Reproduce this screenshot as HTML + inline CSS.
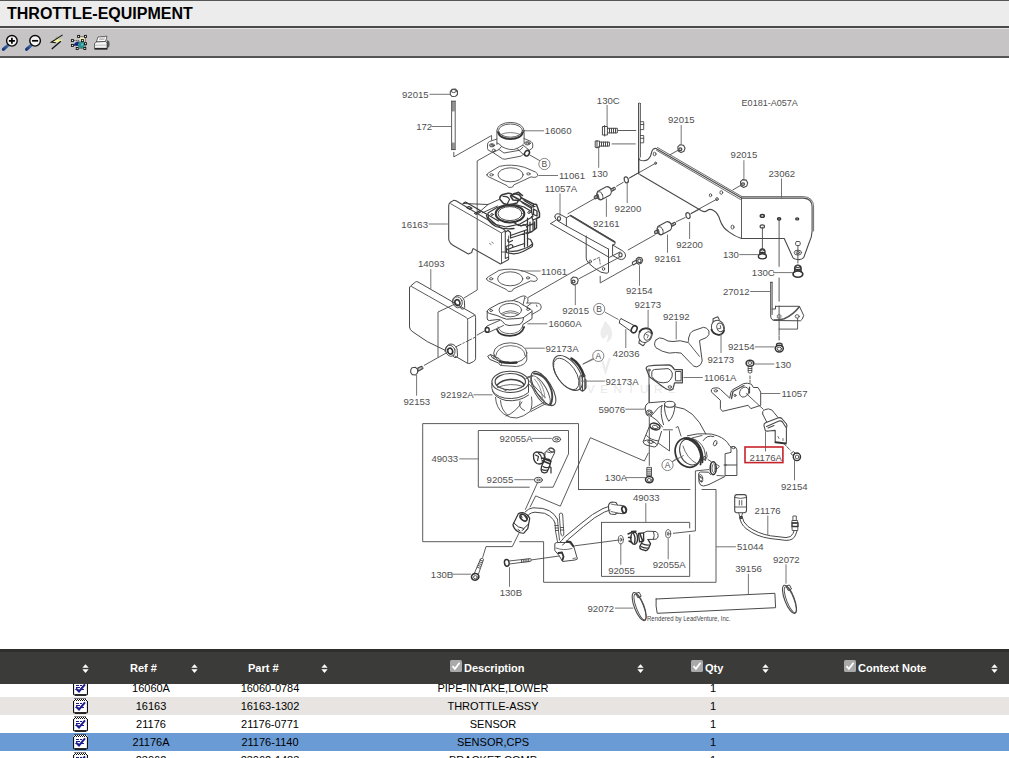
<!DOCTYPE html>
<html><head><meta charset="utf-8">
<style>
*{margin:0;padding:0;box-sizing:border-box}
html,body{width:1009px;height:758px;overflow:hidden;background:#fff;font-family:"Liberation Sans",sans-serif}
#top{position:absolute;left:0;top:0;width:1009px;height:26px;background:#ececec;border-top:1px solid #555}
#title{position:absolute;left:7px;top:3px;font-size:16px;font-weight:bold;color:#000;line-height:19px;white-space:nowrap}
#l1{position:absolute;left:0;top:26px;width:1009px;height:2px;background:#4a4a4a}
#tb{position:absolute;left:0;top:28px;width:1009px;height:29px;background:#c6c4c4;border-top:1px solid #e4e4e4}
#l2{position:absolute;left:0;top:56px;width:1009px;height:2px;background:#555}
#dg{position:absolute;left:0;top:0}
#th{position:absolute;left:0;top:649px;width:1009px;height:35px;background:#3b3b39;border-top:3px solid #2e2e2d}
.r{position:absolute;left:0;width:1009px;height:18px;font-size:11px;line-height:19px;color:#000}
.r span{position:absolute;top:0;text-align:center;white-space:nowrap}
.h{position:absolute;color:#fff;font-weight:bold;font-size:11px;top:662px;white-space:nowrap}
.ic{position:absolute;left:73px;top:1px;width:15px;height:16px}
.sa{position:absolute;top:664.3px;width:7px;height:9px}
.cb{position:absolute;top:660px;width:12px;height:12px}
</style></head><body>
<div id="top"><div id="title">THROTTLE-EQUIPMENT</div></div>
<div id="l1"></div><div id="tb"></div><svg id="tbi" width="130" height="30" viewBox="0 28 130 30" style="position:absolute;left:0;top:28px">
<defs><linearGradient id="hg" x1="0" y1="1" x2="1" y2="0"><stop offset="0" stop-color="#12306e"/><stop offset="1" stop-color="#6f9fd0"/></linearGradient></defs>
<g id="zm"><path d="M7.6 45.6L3.3 49.4" stroke="url(#hg)" stroke-width="2.8" stroke-linecap="round"/><path d="M7.6 45.6L3.3 49.4" stroke="#1b3f86" stroke-width="2.8" stroke-linecap="round" opacity="0.55"/>
<circle cx="11.9" cy="40.8" r="5.3" fill="#f4f4f4" stroke="#0a0a0a" stroke-width="1.4"/></g>
<path d="M8.9 40.8H14.9M11.9 37.8V43.8" stroke="#000" stroke-width="1.7"/>
<g transform="translate(23.2 0)"><path d="M7.6 45.6L3.3 49.4" stroke="url(#hg)" stroke-width="2.8" stroke-linecap="round"/><path d="M7.6 45.6L3.3 49.4" stroke="#1b3f86" stroke-width="2.8" stroke-linecap="round" opacity="0.55"/>
<circle cx="11.9" cy="40.8" r="5.3" fill="#f4f4f4" stroke="#0a0a0a" stroke-width="1.4"/></g>
<path d="M32.1 40.8H38.1" stroke="#000" stroke-width="1.7"/>
<path d="M62.4 34.8L51.3 42L55.5 42.6L60.6 41.4L51.8 49L62.8 39.5L58 40Z" fill="#f2f29a" stroke="none"/>
<path d="M62.6 34.9L51.3 42.2L55.8 42.8" fill="none" stroke="#111" stroke-width="1.1"/>
<path d="M60.8 41.3L51.8 48.9" fill="none" stroke="#111" stroke-width="1.3"/>
<path d="M57 36.5l-2.5 3.5" stroke="#888" stroke-width="0.6"/>
<!-- icon 4 -->
<path d="M78.5 36.5H85.5V48.5H77.5M72.3 40.5L82 40.5M72.3 45.5H77" stroke="#111" stroke-width="0.7" stroke-dasharray="1 1" fill="none"/>
<path d="M79.5 37.5h5v3.5h-5z" fill="#efe9a8"/>
<path d="M73.5 45.5Q75 41 79.5 41.5L79 46Z" fill="#1d2a78"/>
<circle cx="81.4" cy="45" r="3.4" fill="#2a9090"/><circle cx="82.2" cy="44.6" r="1.2" fill="#5cc0b8"/>
<g fill="#fff" stroke="#111" stroke-width="0.9"><rect x="77.6" y="35.4" width="2" height="2"/><rect x="84.5" y="35.4" width="2" height="2"/><rect x="71.4" y="39.6" width="2" height="2"/><rect x="81.4" y="39.6" width="2" height="2"/><rect x="71.4" y="44.4" width="2" height="2"/><rect x="84.5" y="42.7" width="2" height="2"/><rect x="76.2" y="47.5" width="2" height="2"/><rect x="83.8" y="47.5" width="2" height="2"/></g>
<!-- printer -->
<path d="M107 40L109.3 41.5Q110 44 109.3 46.5L107 48.5Z" fill="#555"/>
<path d="M98 37L107 36.2L105.6 41.4L96.4 42Z" fill="#fff" stroke="#333" stroke-width="0.7"/>
<path d="M99.5 38.3L105 37.9M99 39.7L104.5 39.3" stroke="#888" stroke-width="0.6"/>
<path d="M94.5 43.4L96.4 42L105.6 41.4L107 43.2V48.3H94.5Z" fill="#f5f5f5" stroke="#333" stroke-width="0.7"/>
<path d="M95 45.2H106.5" stroke="#999" stroke-width="0.6"/>
<path d="M94.5 48.9H107.5" stroke="#111" stroke-width="1.4"/>
</svg><div id="l2"></div>
<!--DIAGRAM-->
<svg id="dg" width="1009" height="648" viewBox="0 0 1009 648" font-family="Liberation Sans, sans-serif">
<g fill="#ececec" stroke="none"><text x="587" y="393" font-size="11.5px" letter-spacing="5.6" fill="#e9e9e9">VENTURE</text><path d="M605 321Q613 327 612 336Q611 341 606 342.5Q609 338 607 334Q606 338 603 339Q599 335 601 330Q603 326 605 321Z"/><path d="M600 358L605.5 375.5L611 358L608.5 358L605.5 368L602.5 358Z"/></g>
<g fill="none" stroke="#4a4a4a" stroke-width="0.9" stroke-linecap="round" stroke-linejoin="round">
<!-- boxes -->
<path d="M578.5 489.5V423.6H422.7V541.7H511.4M519.7 541.7H543.6V582.3H716V489.5H702M690 489.5H578.5"/>
<path d="M540.4 487.2H553.1L568.5 453.9V430.5H478.3V487.2H529.3"/>
<path d="M601.5 522.4H689.7V527.9M689.7 534.8V576.4H601.5V522.4"/>
<path d="M530.1 507L535.7 495.9L560.3 506.2L590.4 437.7L644.3 461L648.3 453.1"/>
<path d="M708.6 469.6L695.4 470.9V530.9L673.3 533.3"/>
<!-- nut 92015 top-left -->
<path d="M450.3 91.5L452 89.3L455.5 89.1L457.4 91L457.4 94.5L455.5 96.3L452 96.5L450.3 94.6Z" stroke-width="1.1"/>
<ellipse cx="453.8" cy="91" rx="2.6" ry="1.5"/>
<!-- stud 172 -->
<path d="M451.6 101.2V149.6M455.2 101.2V149.6M451.6 101.2H455.2M451.6 149.6H455.2"/>
<path d="M452.5 101.5V111M453.4 101.5V111M454.3 101.5V111M452.5 143V149.5M453.4 143V149.5M454.3 143V149.5" stroke-width="0.6"/>
<!-- bracket leaders -->
<path d="M453.8 152.3V156.9L491.6 135.5V140"/>
<path d="M494.7 151L477.2 160.9V290L464 298"/>
<!-- 16060 pipe -->
<ellipse cx="510.5" cy="130.4" rx="13.6" ry="8"/>
<ellipse cx="510.5" cy="130.6" rx="12" ry="6.6"/>
<path d="M498.5 132.5A12 6.6 0 0 0 522.5 132.5" stroke-width="1.8" stroke="#333"/>
<path d="M500.5 134.5Q510.5 130.5 520.5 134.5" stroke-width="0.7"/>
<path d="M496.9 131V144.5M524.1 131V143.5"/>
<path d="M497 139L489.5 141.5Q487.3 142.5 487.5 145V148.5Q487.7 150.5 490 151L493 152.5L499 149.5L501.5 146.5Q500 143.5 497 143"/>
<ellipse cx="492" cy="145.3" rx="2.6" ry="1.6"/>
<ellipse cx="492" cy="145.3" rx="1.4" ry="0.8"/>
<ellipse cx="493.8" cy="150.3" rx="1.6" ry="1.2"/>
<path d="M524 138.5L531 141.5Q533 142.8 532.8 145L532.5 148L529 150.5"/>
<ellipse cx="527.5" cy="143.3" rx="2.8" ry="1.7"/>
<ellipse cx="527.5" cy="143.3" rx="1.5" ry="0.8"/>
<path d="M493 152.5L502.5 158.8L505 159.2L521.5 156L524 153.5M499 149.5L504 153L520 150.2L523 147"/>
<path d="M501.5 146.5Q510.5 151.5 517 148.5L523 145"/>
<path d="M517 148.5L524.5 155.5M523 145L529.5 150.5"/>
<ellipse cx="527" cy="153.2" rx="2.2" ry="2.9" transform="rotate(35 527 153.2)" stroke-width="1.5" stroke="#333"/>
<path d="M529.8 155L539.5 160.5"/>
<!-- gasket 11061 top -->
<path d="M486.9 174.8Q487 173.5 489 172.6L499.4 166.4Q511.3 163.5 524.5 167.3L535.5 172Q538 173.6 537.7 175.5Q537 177.5 534.4 177.4L531 176.9L513.6 185Q513.6 187 511.5 187.3L508.8 187.4Q507.5 186.8 507 185.6L489 177Q486.8 176.2 486.9 174.8Z"/>
<ellipse cx="510.6" cy="174.8" rx="12.6" ry="7"/>

<ellipse cx="491.5" cy="174.8" rx="1.7" ry="1.1"/>
<ellipse cx="528.4" cy="173.9" rx="1.7" ry="1.1"/>
<!-- throttle body 16163 cover plate -->
<path d="M448.7 206Q448.6 203.5 450.5 202.2L453.2 200.6Q454.5 200 456 200.8L504 229.5Q505.3 230.5 505.3 232V258.5L508.6 257V259.5L500.5 264L477 250.7L473.5 248.6Q472.5 248.8 472.3 250.5L471.7 252.5L468.4 254L456 247Q448.8 243.5 448.7 239Z" stroke-width="1.1"/>
<path d="M450.8 203.8L501.5 233V263.3M501.5 233L505 230.8"/>
<path d="M489.5 243.5l1.5 1M491.8 242.2l1.5 1" stroke-width="0.7"/>
<path d="M501.5 252H505.3M508.6 257V236"/>
<g stroke="#383838">
<!-- top ledge -->
<path d="M463 203.5L465.5 202L498.5 221M466.5 207.5L469 206.5L472 208.3L469.5 209.3ZM474.5 213.5L479.5 211M475.8 214.5L480.5 212" stroke-width="1.15"/>
<path d="M463.5 203.5L488 204.5L499 199.5M480.5 211L488 204.5M482 213L497.5 206"/>
<!-- bore -->
<ellipse cx="510" cy="213.8" rx="14.3" ry="8.7" stroke-width="2.05" stroke="#333"/>
<ellipse cx="510" cy="213.6" rx="12" ry="7"/>
<path d="M488 213L497 207.5Q510 202 524 207L531.5 211.5L533 216.5L520 224L506 227L496 224.5L488.5 218Z" stroke-width="1.15"/>
<ellipse cx="492" cy="214.5" rx="1.3" ry="0.9"/><ellipse cx="529" cy="212.5" rx="1.3" ry="0.9"/>
<!-- top connector -->
<path d="M500 199.5Q499 196 503 194.5L508 193.3Q512 193 512.5 196L519 199.5L517 203Q510 205.5 503.5 203.5Z" stroke-width="1.45"/>
<path d="M510.5 196L514.5 193.5L519.5 195L521.5 198L519 200.5L513 200Z" stroke-width="1.55"/>
<path d="M503 196.5Q508 196 509.5 199.5L507.5 203.5" stroke-width="1.15"/>
<!-- right mechanism -->
<path d="M521.5 198L533.5 204L536.5 204.5L539.5 213V217L536.5 218.5V228L532 231.5L527 233.5" stroke-width="1.45"/>
<path d="M519.5 200.5L531.5 207L535 206.5M531.5 207V212M533.5 204V207M536.5 218.5L533 220V229.5M533 220L531.5 216.5M530 222V232M527.5 218V234" stroke-width="1.25"/>
<path d="M533.5 209L537 211V216L533.5 214.5ZM534.5 222V229M528.5 225.5L533 224" stroke-width="1.35"/>
<!-- lower body -->
<path d="M505.3 232L508 230.5L510.5 232.5V238M508 239.5Q507.5 242 509.5 242L512.5 240.5M510.5 235.5L527.5 229.5M510.5 238L527.5 232.5M524.5 230.5V247M527.5 230V246M521 226L524 224.5Q526.5 225 527 227.5" stroke-width="1.25"/>
<path d="M506 246.5Q505.5 249 508 249.5L512.5 247.5Q513.5 245 511 244.5ZM506.5 249.5V252.5Q515 255.5 523 251.5L531.5 247Q533 246 532.5 243.5L530.5 239.5L527.5 238.5M532.5 243.5Q530 247 523 249Q515 252.5 508.5 251M512.5 247.5L524.5 243.5" stroke-width="1.25"/>
<path d="M514 222.5Q520 228 527 224" stroke-width="1.15"/>
<path d="M486.5 215.5Q488 222 496 226.5Q505 230 514 228.5" stroke-width="1.3"/>
<path d="M513.5 194.2L518.5 192.3L522.5 195.5" stroke-width="1.6"/>
<path d="M522 202.5L531.5 208.5M524 200.5L533 206" stroke-width="1.2"/>
</g>
<!-- lower gasket 11061 -->
<g transform="translate(-0.4 104)">
<path d="M486.9 174.8Q487 173.5 489 172.6L499.4 166.4Q511.3 163.5 524.5 167.3L535.5 172Q538 173.6 537.7 175.5Q537 177.5 534.4 177.4L531 176.9L513.6 185Q513.6 187 511.5 187.3L508.8 187.4Q507.5 186.8 507 185.6L489 177Q486.8 176.2 486.9 174.8Z"/>
<ellipse cx="510.6" cy="174.8" rx="12.6" ry="7"/>
<ellipse cx="491.5" cy="174.8" rx="1.7" ry="1.1"/>
<ellipse cx="528.4" cy="173.9" rx="1.7" ry="1.1"/>
</g>
<!-- 14093 cover -->
<path d="M409.5 288Q409.4 286.8 410.6 286L415.5 282Q416.6 281.2 418 282L474 314.2Q475.6 315.2 475.6 317.5V358.5Q475.6 360.5 473.5 361.5L470 363.3Q468.5 364 467 363L455 356M409.5 288V327Q409.6 330 413 332L427.3 341.6L445.5 350.5" stroke-width="1"/>
<path d="M411.5 286.5L466.3 317.5Q467.7 318.5 467.7 320.5V363M467.7 319L475 315" />
<path d="M455.5 303.8L438 312V357"/>
<path d="M455.8 346.9L474.8 337.4" stroke-dasharray="6 2 1.5 2"/>
<path d="M477.2 335L485.8 330.3"/>
<!-- grommets -->
<g id="grm"><path d="M452.3 303Q452 297.5 457 295.6Q462 295 464.3 300.5L464.7 307.5Q464 309.8 461.5 309L460 306.5" stroke-width="1"/>
<ellipse cx="457.6" cy="302.3" rx="4.6" ry="5.6" transform="rotate(-20 457.6 302.3)"/>
<ellipse cx="457.4" cy="302.6" rx="2.4" ry="3" transform="rotate(-20 457.4 302.6)" stroke-width="1.6" stroke="#333"/></g>
<g transform="translate(-7.2 48.5)"><path d="M452.3 303Q452 297.5 457 295.6Q462 295 464.3 300.5L464.7 307.5Q464 309.8 461.5 309L460 306.5" stroke-width="1"/>
<ellipse cx="457.6" cy="302.3" rx="4.6" ry="5.6" transform="rotate(-20 457.6 302.3)"/>
<ellipse cx="457.4" cy="302.6" rx="2.4" ry="3" transform="rotate(-20 457.4 302.6)" stroke-width="1.6" stroke="#333"/></g>
<!-- 92153 bolt -->
<path d="M447.5 352.3L424.3 365.3"/>
<path d="M410.7 370L412 367.8L415.5 367.3L417.6 369.3L417.5 372.8L415.5 375L412.3 374.6L410.7 372.5Z M417 368.5L421.5 366.2Q423 366.5 423 368.5L417.6 371.5" stroke-width="1.1"/>
<path d="M418.5 368V371M420 367.2V370.2M421.4 366.5V369.5" stroke-width="0.6"/>
<!-- 16060A -->
<path d="M487.2 311.4Q487.3 310 489 309L499 303.5Q506 300.3 513.6 300.6Q519 301.5 522.8 304.8L531 309.5Q532.2 310.3 532 311.5V318.7L522.8 324.6V327.5M487.2 311.4V319Q487.5 320.5 489.5 320.5L497 319.6Q500.5 319 502.5 321.5Q504.5 325.5 509 325.5L519 324.6Q522 324 523 320.5L523.5 317.5L532 311.5M487.2 311.4Q487.5 313 489.5 313.5L497 315.5Q502 318 506.5 319.2L518 318.5Q522 318 523.5 317.5" stroke-width="1"/>
<ellipse cx="510.3" cy="310.1" rx="11.3" ry="6.7"/>
<path d="M501.5 313.5Q510.5 308 519.5 313.5M503 314.5Q510.5 310.8 518 314.5" stroke-width="0.8"/>
<ellipse cx="491.1" cy="310.5" rx="1.5" ry="1"/><ellipse cx="528.1" cy="309.4" rx="1.5" ry="1"/>
<path d="M497 329.5Q499 335.8 510 335.8Q521.5 335.5 524.2 327" stroke-width="1.7" stroke="#333"/>
<path d="M498 327Q500 333.5 510 333.7Q520 333.5 522.5 326.5" stroke-width="0.8"/>
<path d="M499.5 320.5L487 326Q484.8 327.5 485.3 330Q486 332.5 488.5 332.5L503.5 325.5"/>
<ellipse cx="487.2" cy="329.9" rx="2" ry="2.4" stroke-width="1.4" stroke="#333"/>
<path d="M512.5 300.6L521 296.5Q524 295.2 526 296.5Q528.5 298 528 301L527 303M524.5 298.5L523 304.8M527 303L535 303Q538.5 302.5 540.5 304.5Q542 307 540.5 309.5L532 314.5M526.5 307L531 303.5M536.5 305l0.5 1.5M524.5 297l0.6 1.5" stroke-width="0.9"/>
<path d="M528.1 297.5L590 262"/>
<!-- 92173A clamp -->
<ellipse cx="510.3" cy="353" rx="16.6" ry="10.2"/>
<path d="M495.5 356.5Q497 346 510.3 345.6Q524.5 346 525.2 356" stroke-width="0.8"/>
<path d="M494 355V358.5M526.8 355V360Q525 365.5 516.5 366.5L501.5 365.5" stroke-width="0.9"/>
<path d="M500 361.5Q508 363.5 516.5 362.5" stroke-width="2.4" stroke="#333"/>
<path d="M488 356L490.5 354.5L499 358.5L502.5 362.5L500.5 365.5L498.5 363L490 359.5ZM490.5 354.5L492 357.5L499.5 361.5" stroke-width="1"/>
<!-- boot 92192A -->
<ellipse cx="510.3" cy="381.9" rx="18.4" ry="10.6" stroke-width="1.1"/>
<ellipse cx="510.3" cy="381.7" rx="15.2" ry="8.2" stroke-width="1.2"/>
<path d="M497 385Q503 379 512 379.5Q521 380 524 384.5" stroke-width="1.6" stroke="#444"/>
<path d="M497.5 387.5Q510 382 523.5 386.5M503 388.5l2 2.2l2.6-1.2" stroke-width="0.8"/>
<path d="M491.9 383V388.5Q493 395.5 505 398.2Q519 400 528.5 392.5V384M492.5 391Q495 398 506 400.5Q519 402 528.6 395" stroke-width="1"/>
<path d="M495.5 397.3Q496 408 503.8 414Q510 418.5 517 418Q524 416.5 530 411.5Q533 406 531.5 397M500.5 400.5Q501 410 508 415.5M506 416Q515 413 522 402M520 401Q518 408 524.5 410.5" stroke-width="0.9"/>
<ellipse cx="543.5" cy="388.5" rx="19.5" ry="8" transform="rotate(58 543.5 388.5)" stroke-width="1.1"/>
<path d="M534 373.5Q546 374 551.5 390.5Q553.5 398.5 550.5 404.5" stroke-width="1.9" stroke="#444"/>
<ellipse cx="540.5" cy="390.5" rx="16.5" ry="6" transform="rotate(60 540.5 390.5)" stroke-width="0.9"/>
<path d="M527.5 377L532.5 375.5M529.5 381L545 397.5M528.5 383.5L544 400.5M531 411.5L546 403.5M531.5 409L544.5 402M526 378.5L531 376.8" stroke-width="0.9"/>
<path d="M534.5 379Q541 386 542.5 397.5M537 378Q544 386 545 398" stroke-width="0.8" stroke="#777"/>
<!-- clamp A -->
<ellipse cx="567.8" cy="373" rx="20" ry="11" transform="rotate(54 567.8 373)" stroke-width="1.1"/>
<ellipse cx="566.3" cy="374" rx="18" ry="9.3" transform="rotate(55 566.3 374)" stroke-width="0.9"/>
<path d="M571.5 358.5Q580 363.5 584 376" stroke-width="2.6" stroke="#333"/>
<path d="M579.8 376L584.8 375V389.5L582.5 391.3L580 389.5ZM582.5 376V391M584.8 378.5L586 380V388L584.8 389.5" stroke-width="1.1"/>
<path d="M582.9 364L592.6 358.8" stroke="#666"/>
<!-- bracket 23062 -->
<path d="M638.6 103.4V158Q639 160.8 644 160.8Q648.5 160.5 650.5 156L652 151Q653.3 148 656 148.5L741.5 198.1" stroke-width="1.1"/>
<path d="M640.4 103.4V157M638.6 103.4Q639.5 102.5 640.4 103.4M640.4 121.7H643.7V129.6H640.4M640.4 124.5H643.7M640.4 135.5H643.7V142.8H640.4M640.4 138.3H643.7" stroke-width="0.9"/>
<path d="M638.7 158V173.8" stroke-width="1.4"/>
<path d="M657.5 147.5L742 196.6M656.5 150.3L740.5 199.5" stroke-width="0.8"/>
<path d="M741.5 198.1H803.5Q812.1 198.5 812.1 207V231Q812 237 809 243L803.7 257.6Q801 260 798 259.5L795 259Q793.3 258.5 792.9 257.6L784.2 238.5H741.5Q735 236.5 729.6 232.4Q722.5 228 720 220Q718 213 713.5 210.5Q710 208.3 707.2 210.5Q705 212.5 701.5 210.8L639.8 174.5" stroke-width="1.1"/>
<path d="M742 196.6H803.5Q813.5 197 813.6 207V231" stroke-width="0.8"/>
<path d="M741.5 198.1V238.5"/>
<ellipse cx="654.6" cy="154" rx="1.4" ry="1.8"/><ellipse cx="655.6" cy="163.2" rx="1" ry="1.2"/>
<ellipse cx="710.5" cy="195.2" rx="1.2" ry="1.5"/><ellipse cx="721.3" cy="192.5" rx="1.4" ry="1.8"/><ellipse cx="717" cy="199.1" rx="1.3" ry="1.5"/><ellipse cx="732.5" cy="227.1" rx="1.5" ry="2"/>
<ellipse cx="762.3" cy="215.9" rx="2" ry="1.4" stroke-width="1.5" stroke="#333"/><ellipse cx="762.3" cy="226.4" rx="2.2" ry="1.6" stroke-width="1.2"/>
<ellipse cx="779.1" cy="218.9" rx="1.6" ry="1.1" stroke-width="1.4" stroke="#333"/><ellipse cx="797.2" cy="218.9" rx="1.5" ry="1" stroke-width="1.3" stroke="#333"/>
<path d="M655.6 163.2L629.9 177.8M717 199.1L691.3 213.2"/>
<!-- vertical lines from holes -->
<path d="M762.4 227.2V248.9M779.1 219V266.4M779.1 278V301.2M779.1 306V335M797.9 246V263"/>
<!-- tab hole and washer -->
<rect x="795.6" y="241.5" width="4.6" height="4" rx="1.2"/>
<ellipse cx="797.9" cy="252.6" rx="3.7" ry="2.5"/><ellipse cx="797.9" cy="252.6" rx="1.8" ry="1.1"/>
<!-- bolts 130C, 130 top-left -->
<path d="M602.8 126.5H607.4V135H602.8ZM604.6 125.5V136M607.4 128.3H617.3V132.9H607.4M609.5 128.3V132.9M611.5 128.3V132.9M613.5 128.3V132.9M615.5 128.3V132.9" stroke-width="1"/>
<path d="M618.3 130.5H635.8"/>
<path d="M595.6 141H599.5V147.4H595.6ZM597 140.5V148M599.5 142.1H609.4V146.1H599.5M601.5 142.1V146.1M603.5 142.1V146.1M605.5 142.1V146.1M607.5 142.1V146.1" stroke-width="1"/>
<path d="M612.1 143.9H635.2" stroke="#888" stroke-width="1.3"/>
<!-- nuts 92015 -->
<g id="nut"><path d="M677.8 146.8L680 144.7L683.5 145.2L685 148L684 151.2L681 152.6L678.2 151Z" stroke-width="1.1"/><ellipse cx="680.3" cy="149.2" rx="1.5" ry="1.3" stroke-width="1.3"/></g>
<path d="M678 150.3L670.1 154.7"/>
<g transform="translate(62.7 34.9)"><path d="M677.8 146.8L680 144.7L683.5 145.2L685 148L684 151.2L681 152.6L678.2 151Z" stroke-width="1.1"/><ellipse cx="680.3" cy="149.2" rx="1.5" ry="1.3" stroke-width="1.3"/></g>
<path d="M740.8 185.3L732.9 189.9"/>
<!-- dampers 92161 & washers 92200 -->
<g id="dmp"><path d="M594.4 196.2L598 194.6L598.8 197.2L595 199Q593.8 198 594.4 196.2ZM597.5 191.5L606.3 186.7Q609.5 186.2 611 189.5Q612 193.5 609.7 195.3L601.3 199.8Q598.5 200.3 597.2 196.5Q596.3 193.2 597.5 191.5Z" stroke-width="1.1"/>
<ellipse cx="600" cy="195.6" rx="2.6" ry="4.2" transform="rotate(-20 600 195.6)" stroke-width="0.8"/>
<path d="M611 189L614.5 187.2Q615.5 187.7 615.3 189.2L611.8 191.2" stroke-width="1.1"/><path d="M612.3 188.3V190.8M613.5 187.7V190.2" stroke-width="0.6"/>
<path d="M595.5 196v2.5M596.7 195.5v2.5" stroke-width="0.6"/></g>
<g transform="translate(60.3 35)"><path d="M594.4 196.2L598 194.6L598.8 197.2L595 199Q593.8 198 594.4 196.2ZM597.5 191.5L606.3 186.7Q609.5 186.2 611 189.5Q612 193.5 609.7 195.3L601.3 199.8Q598.5 200.3 597.2 196.5Q596.3 193.2 597.5 191.5Z" stroke-width="1.1"/>
<ellipse cx="600" cy="195.6" rx="2.6" ry="4.2" transform="rotate(-20 600 195.6)" stroke-width="0.8"/>
<path d="M611 189L614.5 187.2Q615.5 187.7 615.3 189.2L611.8 191.2" stroke-width="1.1"/><path d="M612.3 188.3V190.8M613.5 187.7V190.2" stroke-width="0.6"/>
<path d="M595.5 196v2.5M596.7 195.5v2.5" stroke-width="0.6"/></g>
<path d="M568 213.7L594.2 198.8M616.5 186.3L623.3 182.3M629 178.2L639 172.4M628.2 249.9L654.5 235.1M676.5 221.6L685.2 217.5M690.5 214L700 209"/>
<ellipse cx="626.3" cy="179.8" rx="2" ry="3" transform="rotate(-15 626.3 179.8)" stroke-width="1.2"/>
<ellipse cx="688" cy="215.6" rx="2" ry="3" transform="rotate(-15 688 215.6)" stroke-width="1.2"/>
<!-- 11057A bracket -->
<path d="M554.8 216.8Q554.5 214.5 557 213.8Q559 213.4 561 214.8L566.4 217.8L570.5 215.3L615 241.7V244.2L612.6 245L622.5 250.8Q626 253 625.6 256Q624.8 259.5 621.5 259.6L619 259L612.6 255.5V245M554.8 216.8Q555 219.5 558 221L566.4 226V217.8M566.4 226L608.5 249.1M608.5 249.1V272Q608 273.5 606 273.2L601 272.2Q594 268.5 588.5 263Q586.2 260.5 586.2 258V236M550.7 223.6L555.5 220.5M550.7 223.6L609.3 257.4L620 252" stroke-width="1"/>
<path d="M570.8 215.8L614.6 241.9" stroke-width="1.7"/><ellipse cx="559" cy="218.6" rx="1.6" ry="2" stroke-width="1.2"/><ellipse cx="620.5" cy="254.9" rx="1.6" ry="2" stroke-width="1.2"/>
<ellipse cx="590.3" cy="261.5" rx="1.2" ry="1.5"/><ellipse cx="603.5" cy="268.9" rx="1.2" ry="1.5"/>
<path d="M593.5 260L599.4 257.4L600.2 264" stroke-dasharray="2.5 1.5" stroke-width="0.8"/>
<path d="M578.8 278.8L619.2 257.4M600.2 276.3V282.9L632.4 264.8"/>
<g transform="translate(-106.8 132.3)"><path d="M677.8 146.8L680 144.7L683.5 145.2L685 148L684 151.2L681 152.6L678.2 151Z" stroke-width="1.1"/><ellipse cx="680.3" cy="149.2" rx="1.5" ry="1.3" stroke-width="1.3"/></g>
<path d="M632.4 262.3L636 260.3L637 262.8L633.3 265Q632 264 632.4 262.3ZM636.3 259L638.5 257.3L641.5 257.8L642.7 260.3L641.5 263L638.8 264.3L636.6 263Z" stroke-width="1.1"/><ellipse cx="639.4" cy="260.8" rx="1.7" ry="1.9" stroke-width="1.2"/>
<!-- bolts 130 / 130C right -->
<g id="fb"><ellipse cx="762.4" cy="256.3" rx="4" ry="2.6" stroke-width="1.4" stroke="#333"/><path d="M759.8 254.5V251.5Q760 249 762.4 249Q764.8 249 765 251.5V254.5M759.8 252Q762.4 253.5 765 252" stroke-width="1.3" stroke="#333"/><ellipse cx="762.4" cy="250" rx="1.6" ry="1"/></g>
<g transform="translate(797.9 272.5) scale(1.22) translate(-762.4 -255)"><g transform="translate(0 0)"><ellipse cx="762.4" cy="256.3" rx="4" ry="2.6" stroke-width="1.4" stroke="#333"/><path d="M759.8 254.5V251.5Q760 249 762.4 249Q764.8 249 765 251.5V254.5M759.8 252Q762.4 253.5 765 252" stroke-width="1.3" stroke="#333"/><ellipse cx="762.4" cy="250" rx="1.6" ry="1"/></g></g>
<!-- 27012 hook -->
<path d="M770.7 282.3V316Q770.8 320.3 775 320.5L800.5 320.8Q802.5 320 803.7 315.5L799.4 306.3H775.5M772.1 282.3V314.5M770.7 282.3H772.1M772.1 309H775.5V306.3" stroke-width="1"/>
<path d="M799.4 306.8Q793 315 784.2 318.8Q780 320 774 320" stroke-width="1.6" stroke="#555"/>
<rect x="777.3" y="314.8" width="3.6" height="3.2" rx="0.8" stroke-width="0.8" stroke-dasharray="1 0.8"/><ellipse cx="797.2" cy="316.4" rx="2" ry="1.7"/>
<path d="M797.6 318.5V329.1H779.1"/>
<!-- nut 92154 right -->
<path d="M779.1 336V340"/>
<ellipse cx="779.3" cy="348.6" rx="4" ry="3.4" stroke-width="1.5" stroke="#333"/><ellipse cx="779.3" cy="348.8" rx="2.2" ry="1.7" stroke-width="1"/>
<path d="M776.6 346V344Q779.3 342.3 782 344V346" stroke-width="1.3" stroke="#333"/>
<!-- bolt 130 #3 -->
<ellipse cx="750" cy="363.3" rx="3.9" ry="3" stroke-width="1.5" stroke="#333"/><ellipse cx="750" cy="363" rx="2" ry="1.4"/>
<path d="M748.2 366.3V372.5Q750 373.8 751.8 372.5V366.3M748.2 368.5H751.8M748.2 370.5H751.8" stroke-width="0.9"/>
<path d="M750 376V382.5" stroke-dasharray="3 1.5"/>
<!-- 11057 bracket -->
<path d="M711.2 391.5Q710.8 389 713 388.2L717 387.8Q719 388 720.5 389.5L729.7 398.1L731 392.1Q731.5 390.5 733 389.5L743.5 383.6Q747 382.5 751.4 384.2L753.4 387.5H758L760.7 392.1V405.3L750.8 408.6L748.1 405.3L722.4 411.3L720.4 408.6V400.7Z" stroke-width="1"/>
<path d="M731.5 398.5L733 391.5L744 385.5" stroke-width="1.3"/>
<ellipse cx="715.8" cy="390.8" rx="1.7" ry="1.1"/><ellipse cx="735" cy="395.4" rx="1" ry="1.2"/>
<ellipse cx="744.2" cy="392.1" rx="4.3" ry="5.3" transform="rotate(35 744.2 392.1)"/>
<path d="M749.5 387V393" stroke-width="1.2"/>
<path d="M746.2 393.5L763.3 409.3"/>
<!-- sensor 21176A -->
<path d="M762.6 413.9Q762 411 764.5 409.8Q768.5 407.8 771.9 410L777.8 417.2M762.6 413.9L766.6 421.8" stroke-width="1"/>
<path d="M764 425.8Q763.5 424 765.5 422.8L777.8 417.9Q780.5 417.2 781.8 418.5L786.5 424Q787.5 426 786.4 427.7V442Q786.3 443.5 785 443.5M764 425.8L765.3 430.4Q766.5 431.5 768.6 431L775.2 430.4V441.5M766.5 426.5L779 421Q781 420.5 782.5 422L785.7 427M768 428L774 425.5" stroke-width="1.1"/>
<path d="M775.5 442.3L785.7 443.6" stroke-width="2" stroke="#333"/>
<path d="M778 436.5l1 2M783 438.5v2" stroke-width="0.8"/>
<path d="M784.4 444.2L790.3 450.2" stroke-dasharray="3 1.2"/>
<path d="M791.2 453.2L793.5 451.5L795 453.2L792.8 455Z" stroke-width="1"/>
<ellipse cx="796.9" cy="456.8" rx="3.6" ry="3.8" stroke-width="1.4" stroke="#333"/><ellipse cx="797.1" cy="457" rx="1.8" ry="1.9"/>
<!-- tube 42036 -->
<path d="M621 318.6L635.5 326.2M619.3 322.9L632.3 332.2M621 318.6Q619 319.5 619.3 322.9" stroke-width="1"/>
<ellipse cx="634.2" cy="329.3" rx="2.6" ry="3.7" transform="rotate(28 634.2 329.3)" stroke-width="1.6" stroke="#333"/>
<!-- clamps 92173 -->
<g id="c73"><ellipse cx="645.4" cy="335.3" rx="6.4" ry="7.4" transform="rotate(35 645.4 335.3)" stroke-width="1"/>
<path d="M639.5 332Q642 327.5 648 328.5Q651.5 329.5 652 333.5" stroke-width="1.8" stroke="#333"/>
<ellipse cx="647.6" cy="336" rx="3.3" ry="4.4" transform="rotate(30 647.6 336)" stroke-width="1"/>
<path d="M646.3 334.5l2.2 0.8l-1.2 2.5" stroke-width="0.8"/>
<path d="M639.5 340L638.8 343L643 345.8L645 343.5" stroke-width="1.1"/></g>
<g transform="translate(717.9 327.6) scale(1 -1) rotate(-12) translate(-645.4 -335.3)"><g transform="translate(0 0)"><ellipse cx="645.4" cy="335.3" rx="6.4" ry="7.4" transform="rotate(35 645.4 335.3)" stroke-width="1"/>
<path d="M639.5 332Q642 327.5 648 328.5Q651.5 329.5 652 333.5" stroke-width="1.8" stroke="#333"/>
<ellipse cx="647.6" cy="336" rx="3.3" ry="4.4" transform="rotate(30 647.6 336)" stroke-width="1"/>
<path d="M646.3 334.5l2.2 0.8l-1.2 2.5" stroke-width="0.8"/>
<path d="M639.5 340L638.8 343L643 345.8L645 343.5" stroke-width="1.1"/></g></g>
<!-- hose 92192 -->
<path d="M656 339.9Q659.3 336.5 663 338.5Q668 342 673 341.5Q680 339.5 687.7 342.5Q689 341 688.6 338L690.3 333.3Q691.5 331.5 694 330.5L703.5 327.3Q707 327.3 709 331Q710 335 706.5 337.5L699.5 340.5L702.2 361Q701.5 365.5 696.9 366.9Q693.5 367 691.5 364L681.1 353.1Q676 352 669.2 353.1Q662 352 656 347.8Q653 344 656 339.9Z" stroke-width="1"/>
<path d="M688.3 342.5L699.5 356.4"/>
<!-- gasket 11061A -->
<path d="M646.1 368.2Q646.5 366.5 648.5 366L654 365.3L669.2 364.9Q672 365.5 674.5 369.6H682.4V382.8H674.5L673.1 388.7Q672 390.3 669.2 390Q666 389.5 663.9 387.4L649.4 376.8Z" stroke-width="1.2"/>
<path d="M652 371.5Q652.5 369.8 654.5 369.5L668 368.6Q671 369.5 672.3 373L672 377Q670.5 380.5 667.9 382.1Q663 383.5 658.6 382.1Q654 380 652 376.8Z" stroke-width="1"/>
<rect x="675.8" y="371.5" width="5.3" height="9.3" stroke-width="1"/>
<ellipse cx="649" cy="370" rx="1.3" ry="0.9"/><ellipse cx="669.8" cy="387" rx="1.7" ry="1.3"/>
<path d="M649 371V402"/>
<!-- manifold 59076 -->
<path d="M645.1 408.1Q645 404.5 648.4 402.8L664.8 401.5M645.1 408.1L646.4 414.7Q648 416.5 651 416L655.5 411Q658 407 662 405.5" stroke-width="1"/>
<ellipse cx="649.3" cy="412.4" rx="3" ry="2.4" stroke-width="1"/><ellipse cx="649.3" cy="412.4" rx="1.5" ry="1.1"/>
<ellipse cx="669.8" cy="404.3" rx="5.3" ry="3" stroke-width="1.1"/>
<path d="M664.5 404.5Q664 414 668.8 421.3Q674.5 416 675.1 404.5" stroke-width="1"/>
<path d="M675.5 406.8Q694 408 705.7 433.8M662 405.5Q659.5 412 663.5 424.6M651 416Q657 419 662.5 427" stroke-width="1"/>
<path d="M705.7 433.8Q698 433 687.3 435.8M705.7 433.8Q712 433.5 717.6 435.8Q726 439 729.5 445.7L731 447.1M703.3 440.5Q707 434.5 713.8 436.6" stroke-width="1"/>
<path d="M731 447.1Q732 446.3 733.5 446.5Q736.5 447 736.9 449.8V475.5H725.1V453.7L731 452.4V447.1M725.1 465H736.5M724 465h2.5" stroke-width="1"/>
<ellipse cx="733.6" cy="447.6" rx="1.7" ry="1.1"/>
<ellipse cx="715.2" cy="443.2" rx="1.6" ry="2.8" transform="rotate(20 715.2 443.2)"/>
<!-- ring A -->
<ellipse cx="688.1" cy="452.6" rx="12.6" ry="15" transform="rotate(-22 688.1 452.6)" stroke-width="1.7" stroke="#333"/>
<ellipse cx="690.5" cy="451.8" rx="10.5" ry="13.5" transform="rotate(-22 690.5 451.8)" stroke-width="1"/>
<path d="M684.5 438.6Q693 439 698.5 448Q702.5 456.5 700.5 464.5" stroke-width="1.8" stroke="#333"/>
<path d="M688.5 438.3Q696 440 700.5 448Q703.5 455.5 702.5 462.5" stroke-width="1.6" stroke="#333"/>
<path d="M692.5 438.5Q700.5 441 704 449Q706 455 705.3 460.5" stroke-width="0.9"/>
<path d="M683 446Q686.5 458 696.5 463.5" stroke-width="0.8"/>
<path d="M692 438L702 435.5M705.3 460.5Q708.5 457 706.5 452" stroke-width="0.9"/>
<ellipse cx="704.3" cy="458" rx="1" ry="1.6" transform="rotate(30 704.3 458)"/>
<!-- injector holder -->
<ellipse cx="654.9" cy="426.5" rx="5.2" ry="3.2" transform="rotate(15 654.9 426.5)" stroke-width="1.5" stroke="#333"/>
<ellipse cx="655.2" cy="427" rx="3" ry="1.6" transform="rotate(15 655.2 427)" stroke-width="0.9"/>
<path d="M649.8 425.5L643.1 441.7Q643.5 444 646 445L654.3 447Q656.5 446.8 657.5 444.5L661.5 431.5M646.5 435.5Q650.5 440 658.5 441M644 441Q650 437.5 657 444.5" stroke-width="1"/>
<ellipse cx="650.5" cy="441.8" rx="2.8" ry="1.5" transform="rotate(15 650.5 441.8)" stroke-width="0.9"/>
<path d="M658.2 443L669.5 451V431M663.5 429.8H672.5M676 427.5L678 426.5L681 436" stroke-width="0.9"/>
<!-- 130A bolt -->
<path d="M649.3 385V402.1M649.3 417.3V465.4"/>
<path d="M647.2 467.4H651.5V476H647.2ZM647.2 469.3H651.5M647.2 471.2H651.5M647.2 473.1H651.5M647.2 475H651.5" stroke-width="0.9"/>
<ellipse cx="649.3" cy="479.6" rx="3.8" ry="3.2" stroke-width="1.5" stroke="#333"/><ellipse cx="649.3" cy="480" rx="2" ry="1.5"/>
<path d="M672.7 461.5L683.3 455.6" stroke="#666"/>
<!-- lower housing pieces -->
<ellipse cx="713.2" cy="468.2" rx="3" ry="6.4" stroke-width="1.6" stroke="#333"/><ellipse cx="713.6" cy="468.2" rx="1.6" ry="4.3"/>
<path d="M716 464L719.5 466.3L716.3 469.5M708 459.5L711 461.5M717 475.5L725 476" stroke-width="0.9"/>
<path d="M698.7 474.8Q698 472.5 700.5 472L708.6 472.2L710.5 474.5M698.7 474.8L699 482Q700 486 703.3 486Q707 485.5 710 484L724.4 476.8" stroke-width="1"/>
<ellipse cx="700.9" cy="478.3" rx="1.8" ry="3.8" transform="rotate(-10 700.9 478.3)"/>
<path d="M700.3 476.5l1 1.5M701 480.5l1 1.3" stroke-width="1.2"/>
<!-- washers -->
<g id="wsh"><ellipse cx="556.6" cy="439.3" rx="4" ry="2.7" stroke-width="1"/><ellipse cx="556.6" cy="439.3" rx="1.7" ry="0.9" stroke-width="0.9"/></g>
<g transform="translate(-18.2 40.7)"><ellipse cx="556.6" cy="439.3" rx="4" ry="2.7" stroke-width="1"/><ellipse cx="556.6" cy="439.3" rx="1.7" ry="0.9" stroke-width="0.9"/></g>
<path d="M537.3 483.2L525.4 509.4"/>
<g id="wsv"><ellipse cx="620.8" cy="539.7" rx="2.5" ry="4.2"/><ellipse cx="620.8" cy="539.7" rx="0.8" ry="1.8" stroke-width="0.8"/></g>
<g transform="translate(47.4 -5.9)"><ellipse cx="620.8" cy="539.7" rx="2.5" ry="4.2"/><ellipse cx="620.8" cy="539.7" rx="0.8" ry="1.8" stroke-width="0.8"/></g>
<path d="M574.9 545.8L618.3 540.1"/>
<!-- injector 1 -->
<g id="inj" stroke-width="1"><path d="M545 452.5L548.5 449Q551 447 553.5 448.5Q555.5 450.5 554.5 453L550.5 461M545 452.5Q544 456 546 459.5" />
<ellipse cx="551.5" cy="450" rx="2.8" ry="1.6" transform="rotate(25 551.5 450)"/>
<path d="M533.5 456Q533 453 536 452L541.5 452.5Q544.5 453.5 544.5 456.5L543.5 462Q541 465 537 463.5Q533.5 461.5 533.5 456Z" stroke-width="1.3" stroke="#333"/>
<path d="M535.5 455l3 1.5l-1 4M538.5 453.5Q541.5 455 541.5 459" stroke-width="1.1" stroke="#333"/>
<path d="M544.5 459.5Q548 458 551 461L549.5 466.5L547 472Q544.5 473.8 542 472Q540.5 470 541.5 466.5Z" stroke-width="1.3" stroke="#333"/>
<path d="M543 466.5Q546 468.5 549 467M542 469.5Q544.5 471 547.5 470M549.5 466.5l1.5 1v5.5" stroke-width="1.2" stroke="#333"/><path d="M542.5 458.2L550.5 461.3M542.2 460.8L549.8 463.8" stroke-width="1.7" stroke="#333"/><path d="M546.6 451.8Q550.5 454 554.6 451.8" stroke-width="0.9"/></g>
<!-- injector 2 -->
<g stroke-width="1"><ellipse cx="634.2" cy="538.3" rx="3.4" ry="6" stroke-width="1.5" stroke="#333"/>
<path d="M628 534L631.5 532.5M628.5 537.5L631 537.5M629 541L632 542.5M631.5 531.5L636 531.2M633.5 533.5Q636 538 634.5 543" stroke-width="1.4" stroke="#333"/>
<path d="M638.5 533.5L643.6 532.8V541L639.5 541.8Z" stroke-width="1.3" stroke="#333"/><path d="M640 534L642.5 540.5" stroke-width="1.5" stroke="#333"/>
<path d="M643.6 532.8L647 531.2L656 531.5Q658.2 533 658.2 535.8Q658 538.5 656 539.2L648 539.5M653.5 531.5Q655 535.5 653.5 539.3" />
<path d="M643.6 539L639.8 546.5Q639.5 548.5 641.5 549.3L645.6 550.7Q647.5 550.5 648.5 548.5L650.5 543.7L648 539.5" stroke-width="1.4" stroke="#333"/>
<path d="M642 543.5Q645 545.5 649 545M641 546.5Q644 548.5 648 548" stroke-width="1.2" stroke="#333"/></g>
<!-- fuel pipe assembly -->
<path d="M512.9 524.7L518.3 513.8Q520.5 512.3 523.8 512.8Q528 514.5 529.7 518.3L527.8 528.7L523.8 533.2Q520.5 533.5 517.3 531.2Q513.5 528.5 512.9 524.7Z" stroke-width="1.2" stroke="#333"/>
<path d="M513.9 523.2Q518 528 523.8 528.5L528 524.5M518 529.5l2 1.5M522 530.5l2-1.5" stroke-width="1" stroke="#333"/>
<ellipse cx="523.6" cy="517.6" rx="4" ry="2.6" transform="rotate(40 523.6 517.6)" stroke-width="1.6" stroke="#333"/>
<path d="M520 514l2 3.5M524.5 515.5l2 3" stroke-width="1.2" stroke="#444"/>
<path d="M525.3 511.8Q528.5 508.3 533 507.8L542.6 508.4Q550 510 554 514.3L557.5 519.3M528.7 514.5Q531.5 512.3 535 512.2L544.6 513.3Q550 515.5 553.5 519.8L555 523.2" stroke-width="1"/>
<path d="M555 523.2L555.5 531L557.5 541.6M557.5 519.3L558.5 531L559.5 540M554.8 525.5H558M555.2 528H558.3M555.5 530.5H558.5" stroke-width="0.9"/>
<path d="M559.3 515Q559.2 513 560.9 513Q562.6 513 562.7 515L563.8 533Q564 536 562.5 536Q561 536 560.7 533ZM560.5 527.5H563.5M560.7 530H563.7" stroke-width="0.9"/>
<path d="M559.5 542.5Q562 541 564 537.5L581 523.5Q593 513 603 508.5L608.7 506.5M562.5 545Q565.5 543 567.5 540L583.5 526.5Q595 516.5 604.5 512L610 510" stroke-width="1"/>
<path d="M608.5 505.5Q609 502.5 612 502L616 502.5L617.5 505L622 505.5Q626 506.5 626.8 509.5Q626.5 513 623 513.8L617 513L615 514.5L610.5 514Q608.5 512.5 608.5 505.5Z" stroke-width="1.1"/>
<ellipse cx="624" cy="509.7" rx="2" ry="3.3" transform="rotate(-15 624 509.7)" stroke-width="1.8" stroke="#333"/>
<path d="M611 504Q614 505 617 505M611 511.5Q614 512 617 513" stroke-width="0.8"/>
<path d="M555.1 543.3Q556 542.5 558 542.5L569.1 542.5L574.1 547.5L577.4 559L575 560L562.5 561.5L559.2 555.7L555.1 550.8Z" stroke-width="1"/>
<path d="M567 541.5L570.5 542L573.5 546.5" stroke-width="2" stroke="#333"/>
<path d="M558.5 553L562 552.5L563.5 556.5L562.5 560" stroke-width="1.8" stroke="#333"/>
<path d="M556 548Q563 551 572 548.5M573 558.5l2.5-.5" stroke-width="0.8"/>
<path d="M518.8 533.5L512.3 546.6H486L482.7 557.4"/>
<!-- bolt 130B #2 -->
<ellipse cx="506.8" cy="562.8" rx="2.3" ry="3.4" transform="rotate(-8 506.8 562.8)" stroke-width="1.5" stroke="#333"/>
<path d="M509 561L530.7 558.6Q531.5 559.8 531 561.2L509.3 564M521.5 559.6V562.6M523.3 559.4V562.4M525.1 559.2V562.2M526.9 559V562M528.7 558.8V561.8" stroke-width="0.9"/>
<path d="M531.5 559.9L559.2 556"/>
<!-- bolt 130B #1 -->
<ellipse cx="475.2" cy="576.8" rx="3.7" ry="3.3" transform="rotate(-15 475.2 576.8)" stroke-width="1.6" stroke="#333"/><ellipse cx="475.4" cy="577.2" rx="1.9" ry="1.6"/>
<path d="M474.5 573L480.8 558.5Q482.3 558 483.6 559.3L478.3 574.5M478.5 563.5l2.7 1M479.3 561.7l2.7 1M480 560l2.7 1M477.8 565.3l2.7 1M477 567.1l2.7 1" stroke-width="0.9"/>
<!-- sensor 21176 -->
<path d="M734.7 497Q734.7 494.7 737 494.6H744.2Q746.5 494.7 746.5 497V510.5Q746.4 512.7 744 512.7H737Q734.8 512.7 734.7 510.5Z" stroke-width="1.1"/>
<path d="M735 497.5Q740.6 499.5 746.3 497.5M739.3 500.5V505M741.8 500.5V505M735 507H746.3M738.6 512.7L739.8 516.5M742.6 512.7L741.6 516.5" stroke-width="0.9"/>
<path d="M739.6 517Q740.5 524 746 528.5Q756 536.5 770 538.5L786 540.4Q793.5 540.5 795.5 535L797 531M742 516.5Q743 522.5 748 526.5Q757.5 533.5 770.5 535.8L786 537.6Q791.5 537.5 793 533.5L794 531" stroke-width="1"/>
<path d="M740.2 516.5h1.6v2h-1.6z" stroke-width="1.2" stroke="#333"/>
<path d="M793.3 516H796.3V520.5H793.3ZM792.3 520.5H797.6V523H792.3ZM792.3 526.5H797.8V530.5H792.6Z" stroke-width="0.9"/>
<path d="M792 523H798V526.5H792Z" stroke-width="1.4" stroke="#333"/>
<!-- tube 39156 -->
<path d="M656.1 599L774.9 593.3L775.6 607.7L657.2 613.3Q655.5 606 656.1 599Z" stroke-width="1"/>
<!-- clamps 92072 -->
<g id="c72"><ellipse cx="789.5" cy="599.3" rx="15" ry="4.8" transform="rotate(69 789.5 599.3)" stroke-width="1.1"/>
<ellipse cx="790.3" cy="599.8" rx="13.8" ry="3.7" transform="rotate(69 790.3 599.8)" stroke-width="0.9"/>
<path d="M786.5 586L789.5 585L791.5 589L788.5 590.3Z" stroke-width="1"/></g>
<g transform="translate(-150.3 7.3)"><ellipse cx="789.5" cy="599.3" rx="15" ry="4.8" transform="rotate(69 789.5 599.3)" stroke-width="1.1"/>
<ellipse cx="790.3" cy="599.8" rx="13.8" ry="3.7" transform="rotate(69 790.3 599.8)" stroke-width="0.9"/>
<path d="M786.5 586L789.5 585L791.5 589L788.5 590.3Z" stroke-width="1"/></g>

</g>
<g stroke="#666" stroke-width="0.9" fill="none">
<path d="M429.5 94.3L450 94.3M431.5 126.5L451.5 126.5M523.4 130.8L544 130.8M538.3 175.5L558 175.5M560 193.4L560 216M428.8 224L447.8 224M607.1 105L607.1 126.7M681.2 125L681.2 145M743.9 160.2L743.9 180.3M781.5 178.5L781.5 198.5M598.7 146L598.7 167.8M627.2 182.6L627.2 203M606.4 198.5L606.4 216.8M689.6 222L689.6 239M667.5 234.6L667.5 252.8M739.3 254.6L758.7 254.6M773 272.6L792.9 272.6M750.2 291.5L770.1 291.5M639.5 265.3L639.5 285.8M648.1 309.8L648.1 330.3M676.2 321.2L676.2 339.4M604.8 312L618.5 319.6M625.8 329L625.8 348M721 333.7L721 353M754.8 346.9L774.6 346.9M754.6 364L774.2 364M683.5 377.5L702.8 377.5M581 381.1L604.8 381.1M761 393.5L780.3 393.5M430.8 269.2L430.8 288.9M520.8 271L540.5 271M575.3 284.5L575.3 305.2M527.4 323.8L547.4 323.8M525.2 348.2L544.8 348.2M593.9 359.1L583 364.1M416.6 375L416.6 395.7M473.5 394.8L492.5 394.8M531.7 438.4L551.8 438.4M459.3 458.9L478.3 458.9M514.3 479.7L533.9 479.7M625.3 409.2L644.7 409.2M765.5 431.3L765.5 451.5M794.5 459.8L794.5 480.3M672 462L676.2 458.6M625.8 477.6L645.8 477.6M645.8 503.1L645.8 522.5M767.8 515.6L767.8 535M716 546.8L735.9 546.8M620.8 543.8L620.8 564.8M668.2 538.8L668.2 559.3M748.4 573.9L748.4 594M786 564.3L786 583.7M615 608.1L633.3 608.1M451.7 574.2L471.1 574.2M509.5 567.2L509.5 586.8"/>
<circle cx="544.4" cy="164" r="5.6" fill="#fff" stroke-width="0.8"/>
<circle cx="599.2" cy="309" r="5.6" fill="#fff" stroke-width="0.8"/>
<circle cx="598.3" cy="355.9" r="5.6" fill="#fff" stroke-width="0.8"/>
<circle cx="667.5" cy="465" r="5.6" fill="#fff" stroke-width="0.8"/>
</g>
<g fill="#505050" font-size="9.6px">
<text x="402" y="98.1">92015</text>
<text x="416.2" y="130.2">172</text>
<text x="544.8" y="134.3">16060</text>
<text x="559" y="179.0">11061</text>
<text x="544.8" y="191.5">11057A</text>
<text x="401.3" y="227.5">16163</text>
<text x="596.8" y="103.5">130C</text>
<text x="741.6" y="106.3" textLength="56.3" lengthAdjust="spacingAndGlyphs">E0181-A057A</text>
<text x="668" y="123.4">92015</text>
<text x="730.6" y="158.3">92015</text>
<text x="768.5" y="177.0">23062</text>
<text x="591.8" y="177.0">130</text>
<text x="614.6" y="212.3">92200</text>
<text x="593" y="226.5">92161</text>
<text x="676.2" y="248.3">92200</text>
<text x="654.5" y="262.0">92161</text>
<text x="722.9" y="258.1">130</text>
<text x="751.8" y="276.1">130C</text>
<text x="722.9" y="295.0">27012</text>
<text x="626" y="294.4">92154</text>
<text x="634.4" y="308.0">92173</text>
<text x="662.9" y="319.7">92192</text>
<text x="612.8" y="357.3">42036</text>
<text x="707.4" y="362.7">92173</text>
<text x="727.9" y="350.4">92154</text>
<text x="775.1" y="367.5">130</text>
<text x="704" y="381.0">11061A</text>
<text x="605.5" y="384.6">92173A</text>
<text x="781.5" y="397.0">11057</text>
<text x="417.9" y="267.3">14093</text>
<text x="541.1" y="274.5">11061</text>
<text x="562.3" y="313.7">92015</text>
<text x="548.5" y="327.3">16060A</text>
<text x="545.5" y="351.7">92173A</text>
<text x="403.5" y="404.7">92153</text>
<text x="440.6" y="398.3">92192A</text>
<text x="499.5" y="441.9">92055A</text>
<text x="431.4" y="462.4">49033</text>
<text x="486.6" y="483.2">92055</text>
<text x="598.4" y="412.7">59076</text>
<text x="749.6" y="461.0">21176A</text>
<text x="781" y="489.5">92154</text>
<text x="604.8" y="481.1">130A</text>
<text x="632.9" y="501.1">49033</text>
<text x="754.6" y="513.9">21176</text>
<text x="737" y="550.3">51044</text>
<text x="608.2" y="574.0">92055</text>
<text x="652.7" y="568.3">92055A</text>
<text x="735.2" y="572.4">39156</text>
<text x="773" y="562.8">92072</text>
<text x="587.5" y="611.6">92072</text>
<text x="430.8" y="577.7">130B</text>
<text x="499.7" y="595.8">130B</text>
<text x="544.4" y="167.0" font-size="8.5px" text-anchor="middle">B</text>
<text x="599.2" y="312.0" font-size="8.5px" text-anchor="middle">B</text>
<text x="598.3" y="358.9" font-size="8.5px" text-anchor="middle">A</text>
<text x="667.5" y="468.0" font-size="8.5px" text-anchor="middle">A</text>
<text x="647" y="621" font-size="7.8px" fill="#444" textLength="83.5" lengthAdjust="spacingAndGlyphs">Rendered by LeadVenture, Inc.</text>
</g>
<rect x="745" y="447" width="37.9" height="15.6" fill="none" stroke="#c8232c" stroke-width="1.6"/>
</svg>
<!--/DIAGRAM-->
<!--TABLE-->
<div class="r" style="top:679px;background:#fff"><svg class="ic" viewBox="0 0 15 16"><rect x="0.5" y="1" width="14" height="14" rx="2" fill="#fff"/><path d="M0.5 3v10.5q0 1.5 1.5 1.5h11q1.5 0 1.5-1.5V3" fill="none" stroke="#111" stroke-width="1.2"/><path d="M2 15h11" stroke="#111" stroke-width="1.6"/><path d="M1.5 0.5h12M1 2.5h13" stroke="#111" stroke-width="1" stroke-dasharray="1 1"/><path d="M1 1.5h13" stroke="#111" stroke-width="1" stroke-dasharray="1 1" stroke-dashoffset="1"/><path d="M3 5.5h3M7 5.5h2M3 7.5h4M2.5 9.5h3M8 9.5h3" stroke="#1c1c8c" stroke-width="1.2"/><path d="M3 8.5l3 3L12 4.3" fill="none" stroke="#1c1c8c" stroke-width="2"/></svg><span style="left:101px;width:100px">16060A</span><span style="left:220px;width:100px">16060-0784</span><span style="left:393px;width:200px">PIPE-INTAKE,LOWER</span><span style="left:693px;width:40px">1</span></div>
<div class="r" style="top:697px;background:#e7e4e1"><svg class="ic" viewBox="0 0 15 16"><rect x="0.5" y="1" width="14" height="14" rx="2" fill="#fff"/><path d="M0.5 3v10.5q0 1.5 1.5 1.5h11q1.5 0 1.5-1.5V3" fill="none" stroke="#111" stroke-width="1.2"/><path d="M2 15h11" stroke="#111" stroke-width="1.6"/><path d="M1.5 0.5h12M1 2.5h13" stroke="#111" stroke-width="1" stroke-dasharray="1 1"/><path d="M1 1.5h13" stroke="#111" stroke-width="1" stroke-dasharray="1 1" stroke-dashoffset="1"/><path d="M3 5.5h3M7 5.5h2M3 7.5h4M2.5 9.5h3M8 9.5h3" stroke="#1c1c8c" stroke-width="1.2"/><path d="M3 8.5l3 3L12 4.3" fill="none" stroke="#1c1c8c" stroke-width="2"/></svg><span style="left:101px;width:100px">16163</span><span style="left:220px;width:100px">16163-1302</span><span style="left:393px;width:200px">THROTTLE-ASSY</span><span style="left:693px;width:40px">1</span></div>
<div class="r" style="top:715px;background:#fff"><svg class="ic" viewBox="0 0 15 16"><rect x="0.5" y="1" width="14" height="14" rx="2" fill="#fff"/><path d="M0.5 3v10.5q0 1.5 1.5 1.5h11q1.5 0 1.5-1.5V3" fill="none" stroke="#111" stroke-width="1.2"/><path d="M2 15h11" stroke="#111" stroke-width="1.6"/><path d="M1.5 0.5h12M1 2.5h13" stroke="#111" stroke-width="1" stroke-dasharray="1 1"/><path d="M1 1.5h13" stroke="#111" stroke-width="1" stroke-dasharray="1 1" stroke-dashoffset="1"/><path d="M3 5.5h3M7 5.5h2M3 7.5h4M2.5 9.5h3M8 9.5h3" stroke="#1c1c8c" stroke-width="1.2"/><path d="M3 8.5l3 3L12 4.3" fill="none" stroke="#1c1c8c" stroke-width="2"/></svg><span style="left:101px;width:100px">21176</span><span style="left:220px;width:100px">21176-0771</span><span style="left:393px;width:200px">SENSOR</span><span style="left:693px;width:40px">1</span></div>
<div class="r" style="top:733px;background:#6b9bd5"><svg class="ic" viewBox="0 0 15 16"><rect x="0.5" y="1" width="14" height="14" rx="2" fill="#fff"/><path d="M0.5 3v10.5q0 1.5 1.5 1.5h11q1.5 0 1.5-1.5V3" fill="none" stroke="#111" stroke-width="1.2"/><path d="M2 15h11" stroke="#111" stroke-width="1.6"/><path d="M1.5 0.5h12M1 2.5h13" stroke="#111" stroke-width="1" stroke-dasharray="1 1"/><path d="M1 1.5h13" stroke="#111" stroke-width="1" stroke-dasharray="1 1" stroke-dashoffset="1"/><path d="M3 5.5h3M7 5.5h2M3 7.5h4M2.5 9.5h3M8 9.5h3" stroke="#1c1c8c" stroke-width="1.2"/><path d="M3 8.5l3 3L12 4.3" fill="none" stroke="#1c1c8c" stroke-width="2"/></svg><span style="left:101px;width:100px">21176A</span><span style="left:220px;width:100px">21176-1140</span><span style="left:393px;width:200px">SENSOR,CPS</span><span style="left:693px;width:40px">1</span></div>
<div class="r" style="top:751px;background:#fff"><svg class="ic" viewBox="0 0 15 16"><rect x="0.5" y="1" width="14" height="14" rx="2" fill="#fff"/><path d="M0.5 3v10.5q0 1.5 1.5 1.5h11q1.5 0 1.5-1.5V3" fill="none" stroke="#111" stroke-width="1.2"/><path d="M2 15h11" stroke="#111" stroke-width="1.6"/><path d="M1.5 0.5h12M1 2.5h13" stroke="#111" stroke-width="1" stroke-dasharray="1 1"/><path d="M1 1.5h13" stroke="#111" stroke-width="1" stroke-dasharray="1 1" stroke-dashoffset="1"/><path d="M3 5.5h3M7 5.5h2M3 7.5h4M2.5 9.5h3M8 9.5h3" stroke="#1c1c8c" stroke-width="1.2"/><path d="M3 8.5l3 3L12 4.3" fill="none" stroke="#1c1c8c" stroke-width="2"/></svg><span style="left:101px;width:100px">23062</span><span style="left:220px;width:100px">23062-1483</span><span style="left:393px;width:200px">BRACKET-COMP</span><span style="left:693px;width:40px">1</span></div>
<div id="th"></div><svg class="sa" style="left:82.0px" viewBox="0 0 8 10"><path d="M4 0L7.6 4.2H0.4zM4 10L7.6 5.8H0.4z" fill="#fff"/></svg><svg class="sa" style="left:191.0px" viewBox="0 0 8 10"><path d="M4 0L7.6 4.2H0.4zM4 10L7.6 5.8H0.4z" fill="#fff"/></svg><svg class="sa" style="left:321.0px" viewBox="0 0 8 10"><path d="M4 0L7.6 4.2H0.4zM4 10L7.6 5.8H0.4z" fill="#fff"/></svg><svg class="sa" style="left:637.0px" viewBox="0 0 8 10"><path d="M4 0L7.6 4.2H0.4zM4 10L7.6 5.8H0.4z" fill="#fff"/></svg><svg class="sa" style="left:762.0px" viewBox="0 0 8 10"><path d="M4 0L7.6 4.2H0.4zM4 10L7.6 5.8H0.4z" fill="#fff"/></svg><svg class="sa" style="left:990.5px" viewBox="0 0 8 10"><path d="M4 0L7.6 4.2H0.4zM4 10L7.6 5.8H0.4z" fill="#fff"/></svg><svg class="cb" style="left:450px" viewBox="0 0 12 12"><rect width="12" height="12" rx="1.5" fill="#a9a9a9"/><path d="M2.5 6.2l2.4 2.6L9.6 2.8" fill="none" stroke="#fff" stroke-width="1.8"/></svg><svg class="cb" style="left:691px" viewBox="0 0 12 12"><rect width="12" height="12" rx="1.5" fill="#a9a9a9"/><path d="M2.5 6.2l2.4 2.6L9.6 2.8" fill="none" stroke="#fff" stroke-width="1.8"/></svg><svg class="cb" style="left:844px" viewBox="0 0 12 12"><rect width="12" height="12" rx="1.5" fill="#a9a9a9"/><path d="M2.5 6.2l2.4 2.6L9.6 2.8" fill="none" stroke="#fff" stroke-width="1.8"/></svg><div class="h" style="left:130px">Ref #</div><div class="h" style="left:248px">Part #</div><div class="h" style="left:464px">Description</div><div class="h" style="left:705px">Qty</div><div class="h" style="left:858px">Context Note</div>
<!--/TABLE-->
</body></html>
